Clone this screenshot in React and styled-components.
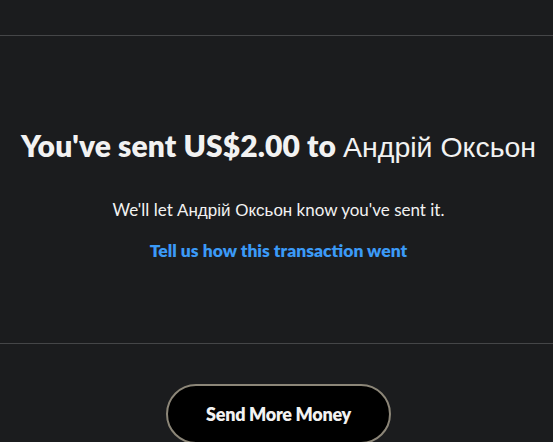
import React from "react";
import styled, { createGlobalStyle } from "styled-components";

const Global = createGlobalStyle`
  html, body { margin: 0; padding: 0; background: #1b1c1e; }
  body { font-family: "Lato", "Liberation Sans", sans-serif; color: #f2f2f2; }
  * { box-sizing: border-box; }
`;

const Page = styled.div`
  width: 553px;
  height: 442px;
  overflow: hidden;
  background: #1b1c1e;
  display: flex;
  flex-direction: column;
`;

const TopBar = styled.div`
  height: 36px;
  flex: none;
  border-bottom: 1px solid #454648;
`;

const Section = styled.section`
  display: flex;
  flex-direction: column;
  align-items: center;
  text-align: center;
  padding: 92px 0 80px 4px;
  border-bottom: 1px solid #454648;
`;

const Heading = styled.h1`
  margin: 0;
  font-size: 30px;
  line-height: 34px;
  font-weight: 800;
  letter-spacing: 0.1px;
  white-space: nowrap;
  color: #f2f2f2;
`;

const Name = styled.span`
  font-family: "Liberation Sans", "Noto Sans", sans-serif;
  font-weight: 400;
  letter-spacing: 0;
  font-size: ${(p) => p.$size || "inherit"};
`;

const Message = styled.p`
  margin: 34px 0 0;
  font-size: 17px;
  line-height: 24px;
  font-weight: 400;
  letter-spacing: 0;
  color: #f2f2f2;
`;

const FeedbackLink = styled.a`
  margin-top: 16px;
  font-size: 17.5px;
  line-height: 24px;
  font-weight: 800;
  letter-spacing: 0;
  color: #3b9af7;
  text-decoration: none;
`;

const Actions = styled.div`
  display: flex;
  justify-content: center;
  padding: 40px 0 0 4px;
`;

const PillButton = styled.button`
  width: 225px;
  height: 60px;
  border-radius: 30px;
  border: 2px solid #8c8678;
  background: #000;
  color: #f2f2f2;
  font-family: "Lato", "Liberation Sans", sans-serif;
  font-size: 18px;
  font-weight: 800;
  letter-spacing: -0.3px;
  cursor: pointer;
`;

export default function App() {
  return (
    <Page>
      <Global />
      <TopBar />
      <Section>
        <Heading>
          You've sent US$2.00 to <Name $size="28.5px">Андрій Оксьон</Name>
        </Heading>
        <Message>
          We'll let <Name>Андрій Оксьон</Name> know you've sent it.
        </Message>
        <FeedbackLink href="#">Tell us how this transaction went</FeedbackLink>
      </Section>
      <Actions>
        <PillButton>Send More Money</PillButton>
      </Actions>
    </Page>
  );
}
